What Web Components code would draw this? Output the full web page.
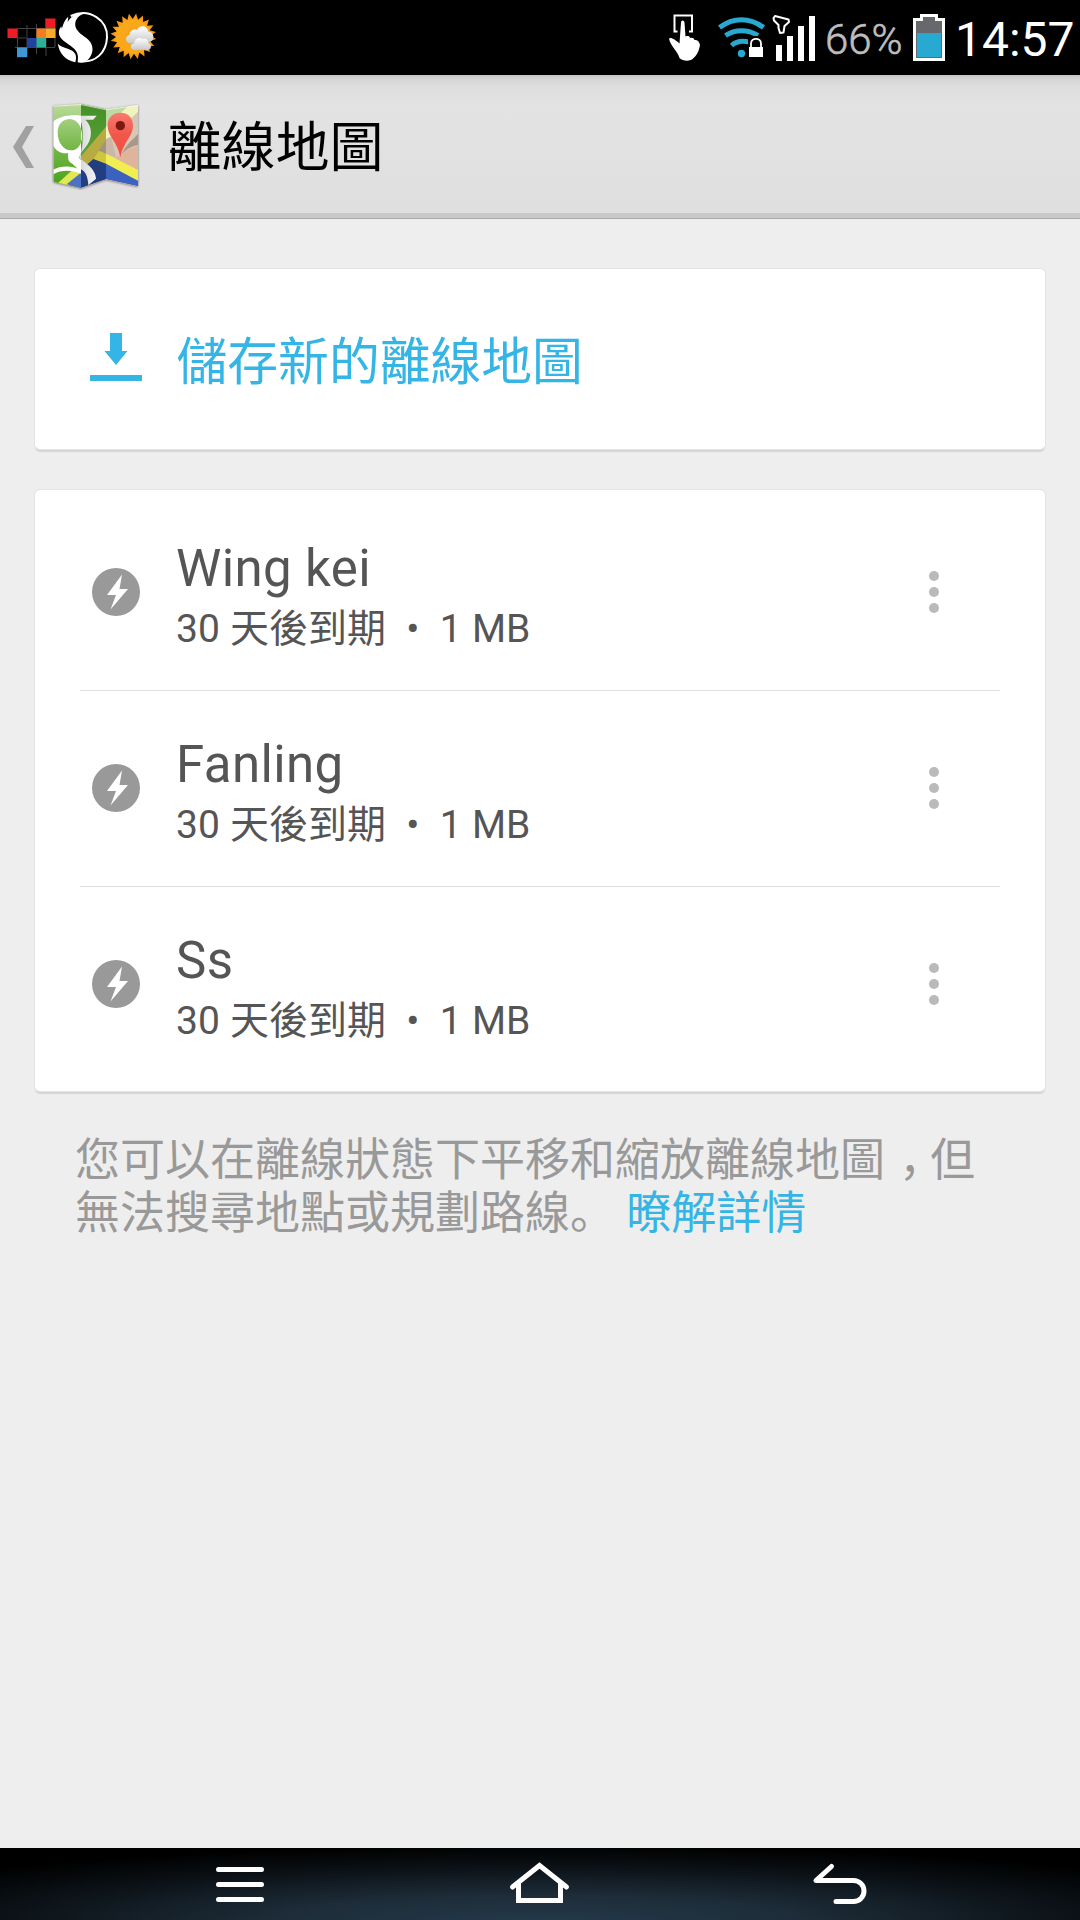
<!DOCTYPE html>
<html lang="zh-Hant">
<head>
<meta charset="utf-8">
<title>離線地圖</title>
<style>
html,body{margin:0;padding:0;background:#eee}
body{width:1080px;height:1920px;overflow:hidden;font-family:Roboto,"Noto Sans CJK TC",sans-serif}
</style>
</head>
<body>
<offline-maps-app></offline-maps-app>
<script>
const sunPoints = (cx, cy, outer, inner, n) => Array.from({length: n * 2}, (_, i) => {
  const a = Math.PI * i / n - Math.PI / 2 + .12, r = i % 2 ? inner : outer;
  return (cx + r * Math.cos(a)).toFixed(1) + ',' + (cy + r * Math.sin(a)).toFixed(1);
}).join(' ');

const ICONS = {
  grid: [52, 75, '5 0 52 75', `<path d="M17 28.5H55.500M17 38H26M15 47.5H55M17.500 28V47M27 25V57M36.500 24V54M46 18V56M55 28V47" stroke="#444" fill="none"/>
    <path fill="#ee1c25" d="M7.500 28.500H17V38H7.500zM45.500 18.500H55.500V28H45.500z"/><path fill="#f47b20" d="M36.500 28.500H46V38H36.500z"/><path fill="#fbab2b" d="M46 28.500H55.500V38H46z"/>
    <path fill="#2142a0" d="M27 38H36.500V47.500H27z"/><path fill="#2bb196" d="M36.500 38H46V47.500H36.500z"/><path fill="#3f98d2" d="M17 47.500H27V57.200H17z"/>`],
  flame: [52, 75, '171 0 156 225', `<path d="M212 48C270 22 324 62 321 113C319 158 286 190 238 184" fill="none" stroke="#fff" stroke-width="6"/>
    <path fill="#fff" d="M250 38C229 39 213 48 203 66L205 50C190 63 191 74 185 86L184 79C176 88 174 101 181 112C192 128 218 138 228 153C236 165 234 178 233 187C244 189 255 186 264 179C283 160 281 133 265 119C250 107 233 98 227 82C222 65 232 47 250 42z"/>
    <path fill="#fff" d="M173 130C178 162 197 181 226 187C232 167 226 155 207 148C192 142 179 140 173 130z"/>`],
  sun: [52, 75, '327 0 156 225', `<defs><radialGradient id="s"><stop offset="0" stop-color="#f7a21a"/><stop offset=".7" stop-color="#fba919"/><stop offset="1" stop-color="#f28d12"/></radialGradient><linearGradient id="c" x2="0" y2="1"><stop stop-color="#fff"/><stop offset="1" stop-color="#c9c9c9"/></linearGradient></defs>
    <polygon points="${sunPoints(400, 109, 69, 52, 20)}" fill="url(#s)"/>
    <path d="M391 130C375 130 373 107 389 105C387 90 405 86 411 90C420 72 443 78 445 95C463 95 466 120 450 126z" fill="url(#c)"/>
    <path d="M404 150C389 150 389 130 402 129C404 112 420 109 428 116C440 111 446 121 446 129C458 133 453 150 443 150z" fill="url(#c)" stroke="#b9b9b9"/>`],
  touch: [34, 75, '668 0 34 75', `<path d="M677.500 31.500H674.500V15.500H692V31.500H689" fill="none" stroke="#fff" stroke-width="2"/>
    <path fill="#fff" d="M681 22.500C681 19.800 684.300 19.800 684.500 22.500L685.500 36.500C688 35.500 689.500 36 690 38C692.500 37.500 694 38.500 694.500 40C697 39.500 699.500 41.500 700 45C698.500 53 696 56 693.500 58C691 61.500 683 61.500 679.500 58C678 52 671 46.500 669 39C670 36.500 675 39.500 679.500 43.500z"/>`],
  wifi: [48, 75, '718 0 48 75', `<g fill="none" stroke="#27a9d1" stroke-width="5"><path d="M719.500 27.500C733 17 750 17 763.500 27.500"/><path d="M725.500 35.500C735 29 748 29 758 35.500"/><path d="M731.500 45.500C737 40.500 743 40.500 749 42"/></g>
    <circle cx="741.500" cy="53.500" r="3.700" fill="#27a9d1"/><path d="M748 46V36H766V58H748z" fill="#000"/><path d="M751 48V43.500C751 37.200 761 37.200 761 43.500V48" fill="none" stroke="#fff" stroke-width="1.800"/><path fill="#fff" d="M749 47H763V57H749z"/>`],
  signal: [44, 75, '771 0 44 75', `<path d="M772.500 18L774 16L787.500 19.500L788 22L783.500 26L782.500 32.500L779 33L777.500 28V25L773 20.500z" fill="none" stroke="#fff" stroke-width="2" stroke-linejoin="round"/>
    <path fill="#fff" d="M775 45H781V61H775zM786 36H792V61H786zM797 26H803V61H797zM808 16H814V61H808z"/>`],
  battery: [32, 75, '913 0 32 75', `<path fill="#fff" d="M920 14H938V18H945V61H913V18H920z"/><path fill="#67686b" d="M923 17H935V21H942V58H916V21H923z"/><path fill="#27a9d1" d="M917 33H941V57H917z"/>`],
  back: [21, 42, '0 0 21 42', `<path fill="#a1a1a1" d="M13 0H21L9 21L21 42H13L0 21z"/>`],
  maps: [90, 90, '150 93 270 270', `<defs><clipPath id="m"><path d="M160 107L243 102L318 118L414 105V349L318 328L243 354L160 335z"/></clipPath>
    <linearGradient id="g1" x2="0" y2="1"><stop stop-color="#bcdc9d"/><stop offset=".5" stop-color="#78b94c"/><stop offset="1" stop-color="#46a014"/></linearGradient>
    <linearGradient id="g2" x2="0" y2="1"><stop stop-color="#459026"/><stop offset="1" stop-color="#5ba53c"/></linearGradient>
    <linearGradient id="wg" x1="0" x2="1"><stop stop-color="#d6d6d6"/><stop offset="1" stop-color="#f5f5f5"/></linearGradient>
    <linearGradient id="p" x2="0" y2="1"><stop stop-color="#fa7a6f"/><stop offset=".5" stop-color="#ef574b"/><stop offset="1" stop-color="#f54c40"/></linearGradient>
    <filter id="sh" x="-10%" y="-10%" width="120%" height="120%"><feDropShadow dx="0" dy="2" stdDeviation="3" flood-opacity=".55"/></filter></defs>
    <g filter="url(#sh)"><path d="M160 107L243 102L318 118L414 105V349L318 328L243 354L160 335z" fill="#cdb8a8"/></g>
    <g clip-path="url(#m)"><path fill="url(#g1)" d="M160 100H243V354H160z"/><path fill="url(#g2)" d="M243 100H318V200L243 280z"/>
    <path fill="#bddaa5" d="M318 110L390 104L318 175z"/><path fill="#d8c6b6" d="M318 175L414 110V300L318 260z"/><path fill="#f1f4bd" d="M318 170L390 103H414V125L330 205L318 210z"/>
    <path fill="#a99888" d="M365 252C382 220 397 210 414 192V225C393 229 379 239 365 252z"/><path fill="#e0b39b" d="M365 254C380 240 395 233 414 228V302L345 264z"/>
    <path fill="#b9ab43" d="M243 259L318 170V260L243 325z"/><path fill="#a19481" d="M295 242L318 210V252z"/><path fill="#ccb7a6" d="M318 207L333 200L348 262L318 253z"/>
    <path fill="#f0ee50" d="M318 251L414 300V335L318 285z"/><path fill="#ccc73b" d="M280 268L297 242L318 251V286z"/>
    <path fill="#223d80" d="M243 300L280 267L318 281V328L243 354z"/><path fill="#3c62bf" d="M318 281L414 332V349L318 328z"/>
    <path fill="#e2e852" d="M175 338L213 304L243 299V315L200 348z"/><path fill="#4d72c5" d="M200 343L243 308V354z"/>
    <path fill="#fff" fill-rule="evenodd" d="M243 137C205 133 164 142 158 160V225C169 246 187 253 205 249C202 265 205 276 217 281L243 306V270L236 263L243 250zM211 147C231 149 246 168 246 197C246 222 234 241 213 241C190 241 173 218 173 187C173 163 187 147 211 147z"/>
    <path fill="url(#wg)" d="M243 137H290L279 149H256C276 167 278 198 263 223C253 238 241 249 237 262C240 270 286 290 288 326L265 346C263 318 257 306 243 297V250C251 220 249 165 243 156z"/>
    <path fill="#fff" d="M158 300C180 287 217 285 243 301V311C216 300 184 298 158 314z"/>
    <path d="M160 107L243 102L318 118L414 105" fill="none" stroke="#fff" stroke-opacity=".6" stroke-width="6"/></g>
    <path fill="url(#p)" d="M361 262C353 215 323 201 323 166C323 141 340 128 361 128S399 141 399 166C399 201 370 215 361 262z"/><circle cx="361" cy="167" r="14" fill="#7a1913"/>`],
  download: [52, 48, '0 0 52 48', `<path fill="#35b5e5" d="M20 0H32V18H37.500L26 32L14.500 18H20zM0 42H52V48H0z"/>`],
  bolt: [48, 48, '0 0 48 48', `<circle cx="24" cy="24" r="24" fill="#999"/><path fill="#fff" d="M30 6.500L27.500 21H36L18.500 41.500L24 27H15z"/>`],
  more: [10, 42, '0 0 10 42', `<g fill="#bababa"><circle cx="5" cy="5" r="5"/><circle cx="5" cy="21" r="5"/><circle cx="5" cy="37" r="5"/></g>`],
  menu: [48, 72, '216 1848 48 72', `<path d="M218.500 1869.500H261.500M218.500 1884.500H261.500M218.500 1899.500H261.500"/>`],
  home: [64, 72, '508 1848 64 72', `<path d="M512.500 1887L539.500 1865.500L566.500 1887" stroke-linejoin="miter"/><path d="M518.500 1883V1900.500H560.500V1883" stroke-linejoin="miter" stroke-linecap="butt"/>`],
  undo: [60, 72, '811 1848 60 72', `<path d="M831.500 1866.500L816 1880.500H853.500A10.500 10.500 0 0 1 853.500 1901.500H836"/>`]
};

class UiIcon extends HTMLElement {
  connectedCallback() {
    const [w, h, box, body] = ICONS[this.getAttribute('name')];
    const r = this.shadowRoot || this.attachShadow({mode: 'open'});
    const line = ['menu', 'home', 'undo'].includes(this.getAttribute('name')) ? 'fill="none" stroke="#fff" stroke-width="5" stroke-linecap="round" stroke-linejoin="round"' : '';
    r.innerHTML = `<style>:host{display:block;flex:none;width:${w}px;height:${h}px}svg{display:block}</style><svg width="${w}" height="${h}" viewBox="${box}" ${line}>${body}</svg>`;
  }
}
customElements.define('ui-icon', UiIcon);

const define = (name, html) => customElements.define(name, class extends HTMLElement {
  constructor() {
    super();
    const t = document.createElement('template');
    t.innerHTML = html;
    this.attachShadow({mode: 'open'}).append(t.content.cloneNode(true));
  }
});

define('status-bar', `<style>
  :host{display:flex;height:75px;background:#000;color:#fff;padding:0 7px 0 5px;box-sizing:border-box}
  .space{flex:1}
  .pct{width:77px;margin:0 11px 0 9px;font-size:42px;line-height:50px;padding-top:15px;color:#bdbdbd;font-weight:300;-webkit-text-stroke:.6px #bdbdbd;white-space:nowrap;box-sizing:border-box}
  .time{width:118px;margin-left:10px;font-size:48px;line-height:58px;padding-top:11px;white-space:nowrap}
  </style>
  <ui-icon name="grid"></ui-icon><ui-icon name="flame"></ui-icon><ui-icon name="sun"></ui-icon>
  <span class="space"></span>
  <ui-icon name="touch"></ui-icon><ui-icon name="wifi" style="margin-left:16px"></ui-icon><ui-icon name="signal" style="margin-left:6px"></ui-icon>
  <span class="pct">66%</span><ui-icon name="battery"></ui-icon><span class="time">14:57</span>`);

define('app-header', `<style>
  :host{display:flex;height:144px;box-sizing:border-box;padding-left:13px;border-bottom:1px solid #a9a9a9;
    background:linear-gradient(#c5c5c5,#d7d7d7 5px,#dedede 12px,#e3e3e3 30px,#dfdfdf 138px,#c9c9c9 138px)}
  .title{font-size:54px;line-height:64px;padding:42px 0 0 27.500px;color:#000;white-space:nowrap}
  </style>
  <ui-icon name="back" style="margin-top:51px"></ui-icon><ui-icon name="maps" style="margin:26px 0 0 16px"></ui-icon>
  <span class="title"><slot></slot></span>`);

define('ui-card', `<style>
  :host{display:block;box-sizing:border-box;background:#fff;border-radius:5px;box-shadow:0 0 0 1px #e4e4e4,0 3px 1px #d5d5d5}
  </style><slot></slot>`);

define('save-action', `<style>
  :host{display:flex;height:180px;box-sizing:border-box;padding:64px 0 0 55px;color:#35b5e5}
  .t{font-size:50.800px;line-height:60px;margin-left:34.500px;white-space:nowrap}
  </style><ui-icon name="download"></ui-icon><span class="t"><slot></slot></span>`);

define('map-row', `<style>
  :host{display:flex;height:196px;box-sizing:border-box;margin:0 45px;border-bottom:1px solid #dfdfdf;color:#555}
  :host([last]){border-bottom-color:transparent}
  .text{flex:1;padding-top:43.500px;margin-left:36px;white-space:nowrap}
  .name{font-size:51px;line-height:60px;letter-spacing:.4px}
  .sub{font-size:39px;line-height:46px;margin-top:7px;word-spacing:.5px}
  </style><ui-icon name="bolt" style="margin:73px 0 0 12px"></ui-icon>
  <div class="text"><div class="name"><slot name="name"></slot></div><div class="sub"><slot></slot></div></div>
  <ui-icon name="more" style="margin:76px 61px 0 0"></ui-icon>`);

define('help-note', `<style>
  :host{display:block;padding:0 0 0 75px;margin-top:43px;color:#999;font-size:45px;line-height:53px;white-space:nowrap}
  div{height:53px}
  .link{color:#35b5e5}
  .comma,.stop{font-family:Roboto,"Noto Sans CJK JP",sans-serif}
  .comma{display:inline-block;box-sizing:border-box;width:45px;padding-left:14px;font-feature-settings:"halt"}
  </style><div>您可以在離線狀態下平移和縮放離線地圖<span class="comma" lang="ja">，</span>但</div>
  <div>無法搜尋地點或規劃路線<span class="stop" lang="ja">。</span> <span class="link">暸解詳情</span></div>`);

define('nav-bar', `<style>
  :host{display:flex;height:72px;padding-left:216px;box-sizing:border-box;background:radial-gradient(ellipse 760px 76px at 50% 102%,#24394a 0%,#1d2c38 35%,#0b1116 72%,#000 100%)}
  </style><ui-icon name="menu"></ui-icon><ui-icon name="home" style="margin-left:244px"></ui-icon><ui-icon name="undo" style="margin-left:239px"></ui-icon>`);

define('offline-maps-app', `<style>
  :host{display:flex;flex-direction:column;width:1080px;height:1920px;background:#eee}
  main{flex:1;display:flex;flex-direction:column;padding-top:50px}
  ui-card{margin:0 35px}.list{margin-top:41px;height:601px;padding-top:5px}
  </style>
  <status-bar></status-bar><app-header>離線地圖</app-header>
  <main><ui-card><save-action>儲存新的離線地圖</save-action></ui-card>
  <ui-card class="list">
    <map-row><span slot="name">Wing kei</span>30 天後到期 &nbsp;•&nbsp; 1 MB</map-row>
    <map-row><span slot="name">Fanling</span>30 天後到期 &nbsp;•&nbsp; 1 MB</map-row>
    <map-row last><span slot="name">Ss</span>30 天後到期 &nbsp;•&nbsp; 1 MB</map-row>
  </ui-card><help-note></help-note></main><nav-bar></nav-bar>`);
</script>
</body>
</html>
